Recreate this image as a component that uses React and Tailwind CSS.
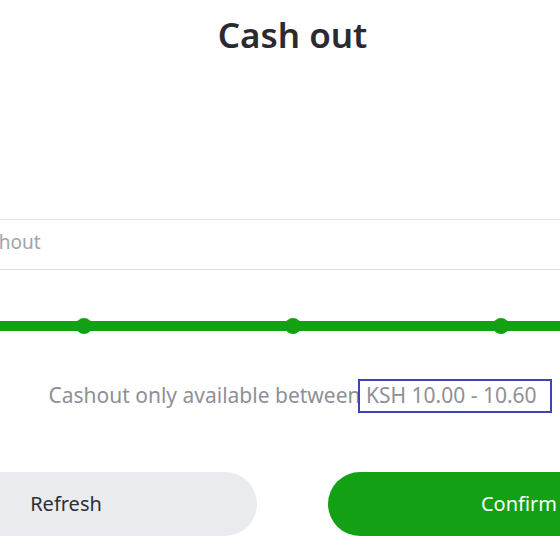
import React from "react";

export default function App() {
  return (
    <div className="w-[560px] h-[560px] overflow-hidden bg-white" style={{ fontFamily: '"Noto Sans", "Open Sans", sans-serif' }}>
      <div className="ml-[-125px] w-[835px] flex flex-col">
        <div className="pt-[17px] text-center">
          <h1 className="text-[35px] leading-[35px] font-semibold text-[#2a2a31]">Cash out</h1>
        </div>

        <div className="mt-[167px] h-[51px] border-y border-[#e2e2e4] flex items-center pb-[4px] pl-[92px]">
          <span className="text-[19px] text-[#a4a4aa]">Cashout</span>
        </div>

        <div className="mt-[48px] h-[16px] flex items-center">
          <div className="w-full h-[10px] bg-[#14a014] flex items-center justify-between">
            <span className="w-[16px] h-[16px] rounded-full bg-[#14a014] -ml-[8px]" />
            <span className="w-[16px] h-[16px] rounded-full bg-[#14a014]" />
            <span className="w-[16px] h-[16px] rounded-full bg-[#14a014]" />
            <span className="w-[16px] h-[16px] rounded-full bg-[#14a014]" />
            <span className="w-[16px] h-[16px] rounded-full bg-[#14a014] -mr-[8px]" />
          </div>
        </div>

        <div className="mt-[44px] h-[34px] leading-[34px] text-center text-[21px] text-[#8f8f97] whitespace-nowrap">
          Cashout only available between{" "}
          <span className="relative">
            KSH 10.00 - 10.60
            <span className="absolute top-[-2px] bottom-[-4px] left-[-8px] right-[-15px] border-2 border-[#3d45b6]" />
          </span>
        </div>

        <div className="mt-[60px] flex gap-[71px]">
          <button className="w-[382px] h-[64px] rounded-full bg-[#e9ebee] text-[20px] text-[#2e2e35]">Refresh</button>
          <button className="w-[382px] h-[64px] rounded-full bg-[#14a014] text-[20px] text-white">Confirm</button>
        </div>
      </div>
    </div>
  );
}
